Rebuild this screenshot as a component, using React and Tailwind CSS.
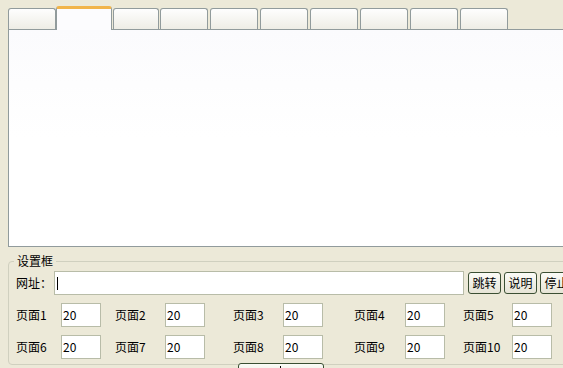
export default function App() {
  const font = { fontFamily: '"Noto Sans CJK SC", "Liberation Sans", sans-serif' };
  const inactiveTabs = [
    "ml-[1px] w-[46px]",
    "ml-[1px] w-[48px]",
    "ml-[2px] w-[48px]",
    "ml-[2px] w-[48px]",
    "ml-[2px] w-[48px]",
    "ml-[2px] w-[48px]",
    "ml-[2px] w-[48px]",
    "ml-[2px] w-[48px]",
  ];
  const row1 = [
    ["页面1", "w-[45px]", "ml-0"],
    ["页面2", "w-[50px]", "ml-[14px]"],
    ["页面3", "w-[50px]", "ml-[28px]"],
    ["页面4", "w-[51px]", "ml-[31px]"],
    ["页面5", "w-[49px]", "ml-[18px]"],
  ];
  const row2 = [
    ["页面6", "w-[45px]", "ml-0"],
    ["页面7", "w-[50px]", "ml-[14px]"],
    ["页面8", "w-[50px]", "ml-[28px]"],
    ["页面9", "w-[51px]", "ml-[31px]"],
    ["页面10", "w-[49px]", "ml-[18px]"],
  ];
  const Row = ({ items }) => (
    <div className="flex items-center h-[24px]">
      {items.map(([label, w, ml]) => (
        <div key={label} className={`flex items-center ${ml}`}>
          <div className={`${w} text-[12px] leading-[14px] text-black`}>{label}</div>
          <div className="w-[40px] h-[24px] bg-white border border-[#b8bca8] flex items-center pl-[1px] text-[12px] text-black">
            20
          </div>
        </div>
      ))}
    </div>
  );
  const Btn = ({ children }) => (
    <div className="w-[33px] h-[22px] rounded-[3px] border border-[#3b4f33] bg-gradient-to-b from-[#fbfbf7] to-[#e6e4d6] flex items-center justify-center text-[12px] text-black shrink-0">
      {children}
    </div>
  );
  return (
    <div
      className="relative w-[563px] h-[368px] overflow-hidden bg-[#ece9d8] pt-[6px] pl-[8px]"
      style={font}
    >
      {/* tab strip */}
      <div className="flex items-end h-[23px]">
        <div className="w-[48px] h-[21px] rounded-t-[3px] border border-b-0 border-[#919b9c] bg-gradient-to-b from-[#fefefe] to-[#eeede5]" />
        <div className="relative z-10 w-[56px] h-[24px] -mb-[1px] rounded-t-[3px] border border-b-0 border-[#919b9c] border-t-[3px] border-t-[#f1b44a] bg-[#fcfcfe]" />
        {inactiveTabs.map((c, i) => (
          <div
            key={i}
            className={`${c} h-[21px] rounded-t-[3px] border border-b-0 border-[#919b9c] bg-gradient-to-b from-[#fefefe] to-[#eeede5]`}
          />
        ))}
      </div>
      {/* tab panel */}
      <div className="w-[560px] h-[218px] border border-[#919b9c] bg-gradient-to-b from-[#fbfbfd] via-white to-white" />

      {/* group box */}
      <div className="relative mt-[14px] w-[570px] h-[104px] rounded-[4px] border border-[#d0d0bf] pl-[7px] pt-[9px]">
        <div className="absolute -top-[9px] left-[5px] px-[3px] bg-[#ece9d8] text-[12px] leading-[16px] text-black">
          设置框
        </div>
        <div className="flex items-center h-[24px]">
          <div className="w-[38px] text-[12px] text-black">网址：</div>
          <div className="w-[410px] h-[24px] bg-white border border-[#b8bca8] flex items-center pl-[2px]">
            <div className="w-[1px] h-[13px] bg-black" />
          </div>
          <div className="flex gap-[3px] ml-[4px]">
            <Btn>跳转</Btn>
            <Btn>说明</Btn>
            <Btn>停止</Btn>
          </div>
        </div>
        <div className="mt-[8px] flex flex-col gap-[8px]">
          <Row items={row1} />
          <Row items={row2} />
        </div>
      </div>

      {/* peeking button */}
      <div className="absolute left-[238px] top-[363px] w-[86px] h-[20px] rounded-[3px] border border-[#3b4f33] bg-gradient-to-b from-[#fbfbf7] to-[#e6e4d6]">
        <div className="absolute left-[41px] top-[2px] w-[1px] h-[4px] bg-black" />
      </div>
    </div>
  );
}
